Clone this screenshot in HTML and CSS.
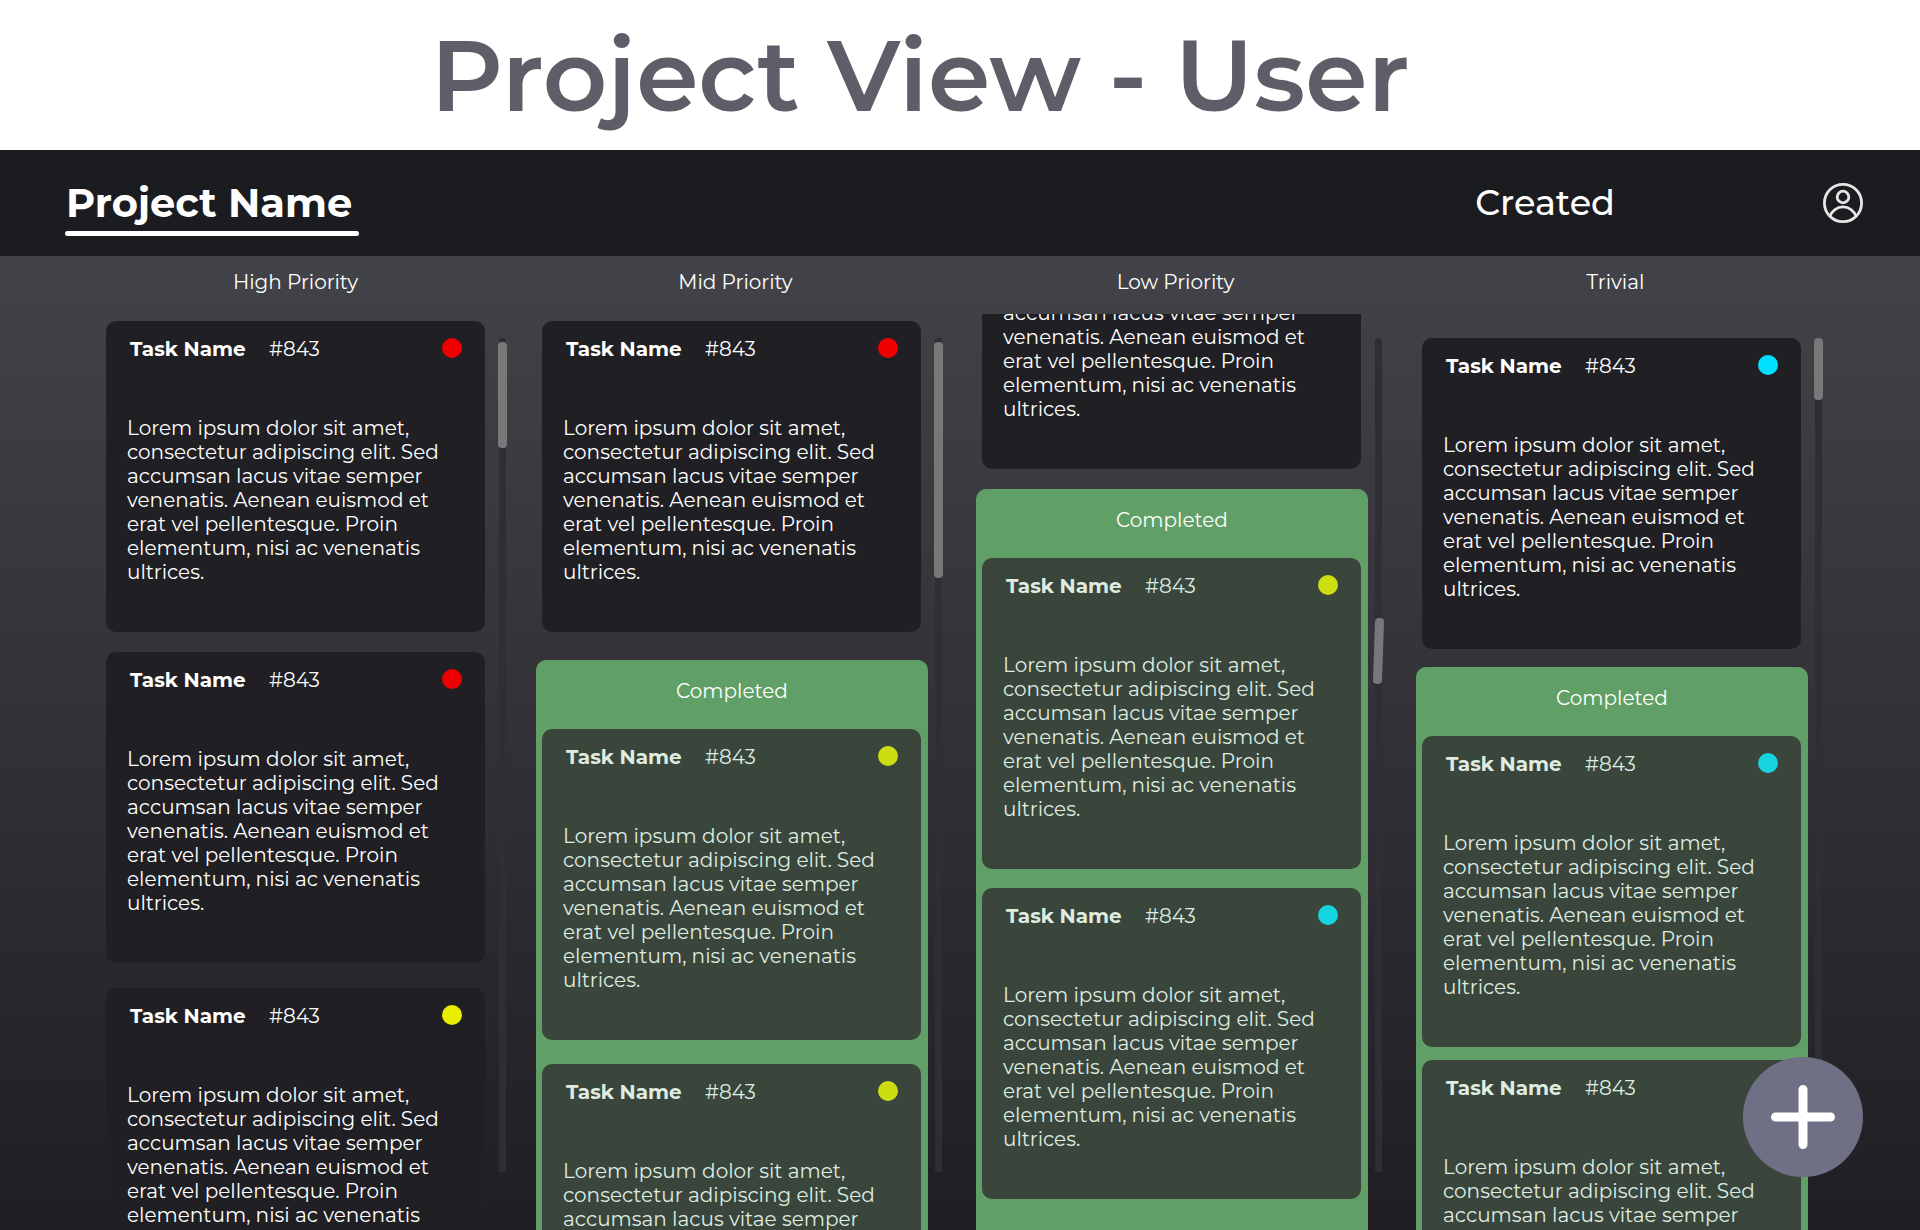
FILE: index.html
```html
<!DOCTYPE html>
<html lang="en">
<head>
<meta charset="utf-8">
<title>Project View - User</title>
<meta name="viewport" content="width=device-width, initial-scale=1">
<link rel="stylesheet" href="styles.css">
</head>
<body>
<div class="page">
  <h1 class="page-title">Project View - User</h1>

  <header class="topbar">
    <h2 class="project-name">Project Name</h2>
    <nav class="topbar-nav">
      <a class="nav-link" href="#created">Created</a>
      <button class="account" type="button" aria-label="Account">
        <svg viewBox="0 0 40 40" width="40" height="40" fill="none" stroke="currentColor" stroke-width="2.8" aria-hidden="true">
          <circle cx="20" cy="20" r="18.6"/>
          <circle cx="20" cy="14" r="5.8"/>
          <path d="M7 33.5A13.6 13.6 0 0 1 33 33.5"/>
        </svg>
      </button>
    </nav>
  </header>

  <main class="board">
    <section class="column">
      <h3 class="column-title">High Priority</h3>
      <div class="card-list">
        <article class="card">
          <header class="card-head"><h4 class="card-name">Task Name</h4><span class="card-id">#843</span><span class="dot dot-red"></span></header>
          <p class="card-text">Lorem ipsum dolor sit amet, consectetur adipiscing elit. Sed accumsan lacus vitae semper venenatis. Aenean euismod et erat vel pellentesque. Proin elementum, nisi ac venenatis ultrices.</p>
        </article>
        <article class="card">
          <header class="card-head"><h4 class="card-name">Task Name</h4><span class="card-id">#843</span><span class="dot dot-red"></span></header>
          <p class="card-text">Lorem ipsum dolor sit amet, consectetur adipiscing elit. Sed accumsan lacus vitae semper venenatis. Aenean euismod et erat vel pellentesque. Proin elementum, nisi ac venenatis ultrices.</p>
        </article>
        <article class="card card-next-group">
          <header class="card-head"><h4 class="card-name">Task Name</h4><span class="card-id">#843</span><span class="dot dot-yellow"></span></header>
          <p class="card-text">Lorem ipsum dolor sit amet, consectetur adipiscing elit. Sed accumsan lacus vitae semper venenatis. Aenean euismod et erat vel pellentesque. Proin elementum, nisi ac venenatis</p>
        </article>
      </div>
      <div class="track"><div class="thumb thumb-high"></div></div>
    </section>

    <section class="column">
      <h3 class="column-title">Mid Priority</h3>
      <div class="card-list list-mid">
        <article class="card">
          <header class="card-head"><h4 class="card-name">Task Name</h4><span class="card-id">#843</span><span class="dot dot-red"></span></header>
          <p class="card-text">Lorem ipsum dolor sit amet, consectetur adipiscing elit. Sed accumsan lacus vitae semper venenatis. Aenean euismod et erat vel pellentesque. Proin elementum, nisi ac venenatis ultrices.</p>
        </article>
        <section class="completed">
          <h4 class="completed-title">Completed</h4>
          <article class="card">
            <header class="card-head"><h4 class="card-name">Task Name</h4><span class="card-id">#843</span><span class="dot dot-yellow"></span></header>
            <p class="card-text">Lorem ipsum dolor sit amet, consectetur adipiscing elit. Sed accumsan lacus vitae semper venenatis. Aenean euismod et erat vel pellentesque. Proin elementum, nisi ac venenatis ultrices.</p>
          </article>
          <article class="card">
            <header class="card-head"><h4 class="card-name">Task Name</h4><span class="card-id">#843</span><span class="dot dot-yellow"></span></header>
            <p class="card-text">Lorem ipsum dolor sit amet, consectetur adipiscing elit. Sed accumsan lacus vitae semper</p>
          </article>
        </section>
      </div>
      <div class="track"><div class="thumb thumb-mid"></div></div>
    </section>

    <section class="column">
      <h3 class="column-title">Low Priority</h3>
      <div class="card-list list-low">
        <article class="card card-scrolled">
          <p class="card-text">accumsan lacus vitae semper venenatis. Aenean euismod et erat vel pellentesque. Proin elementum, nisi ac venenatis ultrices.</p>
        </article>
        <section class="completed">
          <h4 class="completed-title">Completed</h4>
          <article class="card">
            <header class="card-head"><h4 class="card-name">Task Name</h4><span class="card-id">#843</span><span class="dot dot-yellow"></span></header>
            <p class="card-text">Lorem ipsum dolor sit amet, consectetur adipiscing elit. Sed accumsan lacus vitae semper venenatis. Aenean euismod et erat vel pellentesque. Proin elementum, nisi ac venenatis ultrices.</p>
          </article>
          <article class="card">
            <header class="card-head"><h4 class="card-name">Task Name</h4><span class="card-id">#843</span><span class="dot dot-cyan"></span></header>
            <p class="card-text">Lorem ipsum dolor sit amet, consectetur adipiscing elit. Sed accumsan lacus vitae semper venenatis. Aenean euismod et erat vel pellentesque. Proin elementum, nisi ac venenatis ultrices.</p>
          </article>
        </section>
      </div>
      <div class="track"><div class="thumb thumb-low"></div></div>
    </section>

    <section class="column">
      <h3 class="column-title">Trivial</h3>
      <div class="card-list list-trivial">
        <article class="card">
          <header class="card-head"><h4 class="card-name">Task Name</h4><span class="card-id">#843</span><span class="dot dot-cyan"></span></header>
          <p class="card-text">Lorem ipsum dolor sit amet, consectetur adipiscing elit. Sed accumsan lacus vitae semper venenatis. Aenean euismod et erat vel pellentesque. Proin elementum, nisi ac venenatis ultrices.</p>
        </article>
        <section class="completed">
          <h4 class="completed-title">Completed</h4>
          <article class="card">
            <header class="card-head"><h4 class="card-name">Task Name</h4><span class="card-id">#843</span><span class="dot dot-cyan"></span></header>
            <p class="card-text">Lorem ipsum dolor sit amet, consectetur adipiscing elit. Sed accumsan lacus vitae semper venenatis. Aenean euismod et erat vel pellentesque. Proin elementum, nisi ac venenatis ultrices.</p>
          </article>
          <article class="card">
            <header class="card-head"><h4 class="card-name">Task Name</h4><span class="card-id">#843</span></header>
            <p class="card-text">Lorem ipsum dolor sit amet, consectetur adipiscing elit. Sed accumsan lacus vitae semper</p>
          </article>
        </section>
      </div>
      <div class="track"><div class="thumb thumb-trivial"></div></div>
    </section>
  </main>

  <button class="add-task" type="button" aria-label="Add task">
    <svg viewBox="0 0 64 64" width="64" height="64" stroke="currentColor" stroke-width="9" stroke-linecap="round" aria-hidden="true">
      <path d="M32 4.5V59.5M4.5 32H59.5"/>
    </svg>
  </button>
</div>
</body>
</html>
```
FILE: styles.css
```css
* {
  box-sizing: border-box;
}

body,
h1,
h2,
h3,
h4,
p {
  margin: 0;
}

body {
  font-family: Montserrat, Inter, sans-serif;
  font-size: 20px;
  font-weight: 400;
  line-height: 24px;
  color: #fff;
  background: #fff;
}

.page {
  display: flex;
  flex-direction: column;
  height: 100vh;
  overflow: hidden;
}

.page-title {
  flex: none;
  padding: 15px 80px 15px 0;
  font-size: 100px;
  font-weight: 600;
  line-height: 120px;
  text-align: center;
  color: #5e5e68;
}

/* Top bar */

.topbar {
  flex: none;
  display: flex;
  align-items: center;
  justify-content: space-between;
  height: 106px;
  padding: 0 57px 0 65px;
  background: #1b1c20;
}

.project-name {
  padding: 9px 7px 0 1px;
  font-size: 40px;
  font-weight: 700;
  line-height: 48px;
}

.project-name::after {
  content: "";
  display: block;
  height: 5px;
  margin: 4px -7px 0 -1px;
  border-radius: 3px;
  background: #fff;
}

.topbar-nav {
  display: flex;
  align-items: center;
  gap: 208px;
}

.nav-link {
  font-size: 35px;
  font-weight: 500;
  line-height: 44px;
  color: #fff;
  text-decoration: none;
}

.account {
  display: flex;
  padding: 0;
  border: 0;
  color: #e6e6e6;
  background: none;
}

/* Board */

.board {
  flex: 1;
  min-height: 0;
  display: grid;
  grid-template-columns: 436fr 440fr 440fr 440fr;
  padding: 0 64px 0 100px;
  background: linear-gradient(#424349, #1f1e23);
}

.column {
  min-height: 0;
  display: grid;
  grid-template-columns: minmax(0, 1fr) 9px;
  grid-template-rows: 58px minmax(0, 1fr);
  column-gap: 6px;
  padding-right: 33px;
}

.column:first-child {
  padding-right: 29px;
}

.column-title {
  grid-column: 1 / -1;
  padding: 14px 8px 0 0;
  font-size: 20px;
  font-weight: 400;
  text-align: center;
}

.column:first-child .column-title {
  padding-right: 16px;
}

.card-list {
  display: flex;
  flex-direction: column;
  gap: 20px;
  padding-top: 7px;
  overflow: hidden;
}

.list-mid {
  gap: 28px;
}

.list-low {
  padding-top: 0;
}

.list-trivial {
  gap: 18px;
  padding-top: 24px;
}

/* Cards */

.card {
  flex: none;
  margin: 0 7px 0 6px;
  padding: 16px 23px 48px 21px;
  border-radius: 10px;
  background: #201f24;
}

.card-next-group {
  margin-top: 5px;
}

.card-scrolled {
  margin-top: -13px;
  padding-top: 0;
}

.card-head {
  display: flex;
  align-items: flex-start;
  height: 24px;
  margin-bottom: 55px;
  padding-left: 3px;
}

.card-name {
  width: 139px;
  font-size: 20px;
  font-weight: 700;
}

.card-id {
  flex: 1;
}

.dot {
  width: 20px;
  height: 20px;
  margin-top: 1px;
  border-radius: 50%;
}

.dot-red {
  background: #ee0000;
}

.dot-yellow {
  background: #e9ee00;
}

.dot-cyan {
  background: #00e1ff;
}

/* Completed group */

.completed {
  flex: none;
  display: flex;
  flex-direction: column;
  gap: 24px;
  padding-bottom: 48px;
  border-radius: 10px;
  background: #60a066;
}

.list-low .completed {
  gap: 19px;
}

.list-trivial .completed {
  gap: 13px;
}

.completed-title {
  height: 69px;
  padding-top: 19px;
  font-size: 20px;
  font-weight: 400;
  text-align: center;
}

.completed .completed-title + .card {
  margin-top: -24px;
}

.list-low .completed .completed-title + .card {
  margin-top: -19px;
}

.list-trivial .completed .completed-title + .card {
  margin-top: -13px;
}

.completed .card {
  color: #dfece0;
  background: #3a463c;
}

.completed .dot-yellow {
  background: #ccdd11;
}

.completed .dot-cyan {
  background: #16d3e0;
}

/* Scroll indicators */

.track {
  display: flex;
  flex-direction: column;
  align-items: center;
  margin: 24px 0 58px;
  background: linear-gradient(#2f2f2f, #2f2f2f) center / 7px 100% no-repeat;
  border-radius: 4px;
}

.thumb {
  width: 9px;
  border-radius: 4px;
  background: #787878;
}

.thumb-high {
  height: 106px;
  margin-top: 4px;
}

.thumb-mid {
  height: 236px;
  margin-top: 4px;
}

.thumb-low {
  height: 66px;
  margin-top: 280px;
  transform: rotate(2deg);
}

.thumb-trivial {
  height: 62px;
}

/* Floating action */

.add-task {
  position: fixed;
  right: 57px;
  bottom: 53px;
  display: flex;
  align-items: center;
  justify-content: center;
  width: 120px;
  height: 120px;
  padding: 0;
  border: 0;
  border-radius: 50%;
  color: #fff;
  background: #6f6f85;
}
```
